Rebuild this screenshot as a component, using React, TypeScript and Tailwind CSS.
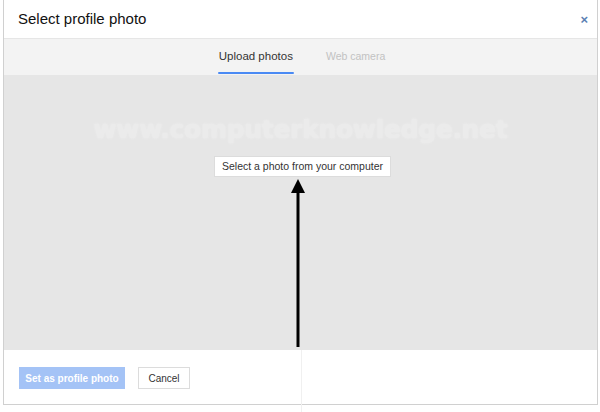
import React from "react";

const Arrow = () => (
  <svg width="16" height="168" viewBox="0 0 16 168" className="absolute left-[290px] top-[179px]">
    <path d="M8 0 L15 14 L1 14 Z" fill="#000" />
    <rect x="6.5" y="12" width="3" height="156" fill="#000" />
  </svg>
);

export default function App() {
  return (
    <div className="relative w-[600px] h-[412px] bg-white font-['Liberation_Sans',Arial,sans-serif] overflow-hidden">
      <div className="ml-[3px] w-[595px] h-[405px] border-l border-r border-b border-[#d0d0d0] flex flex-col">
        {/* header */}
        <div className="h-[38px] flex items-center justify-between pl-[14px] pr-[9px] bg-white">
          <div className="text-[15px] text-[#111]">Select profile photo</div>
          <div className="text-[#5a7fb3] text-[13px] font-bold leading-none">×</div>
        </div>

        {/* tabs */}
        <div className="h-[37px] bg-[#f3f3f3] border-t border-[#e6e6e6] flex justify-center gap-[32px] pl-[2px]">
          <div className="relative flex items-center px-[1px] text-[11.5px] text-[#333]">
            Upload photos
            <div className="absolute left-0 right-0 bottom-[1px] h-[2px] bg-[#4a8af4] rounded-full"></div>
          </div>
          <div className="flex items-center text-[10.5px] text-[#c2c2c2]">Web camera</div>
        </div>

        {/* upload area */}
        <div className="h-[275px] bg-[#e6e6e6] flex flex-col items-center">
          <div className="mt-[42px] text-[25px] font-bold text-[#ebebeb] tracking-[-0.3px] font-['DejaVu_Sans',sans-serif] leading-none [text-shadow:0_0_2px_#f0f0f0]">
            www.computerknowledge.net
          </div>
          <button className="mt-[14px] ml-[4px] h-[21px] px-[7px] bg-white border border-[#dcdcdc] text-[10.5px] text-[#333]">
            Select a photo from your computer
          </button>
        </div>

        {/* footer */}
        <div className="flex-1 bg-white flex items-center gap-[13px] pl-[15px] pt-[2px]">
          <button className="h-[22px] w-[106px] bg-[#a4c3f6] text-white text-[10px] font-bold">Set as profile photo</button>
          <button className="h-[22px] w-[52px] bg-white border border-[#dcdcdc] text-[10px] text-[#333]">Cancel</button>
        </div>
      </div>

      <div className="absolute left-[301px] top-[350px] w-px h-[62px] bg-[#f0f0f0]"></div>
      <Arrow />
    </div>
  );
}
